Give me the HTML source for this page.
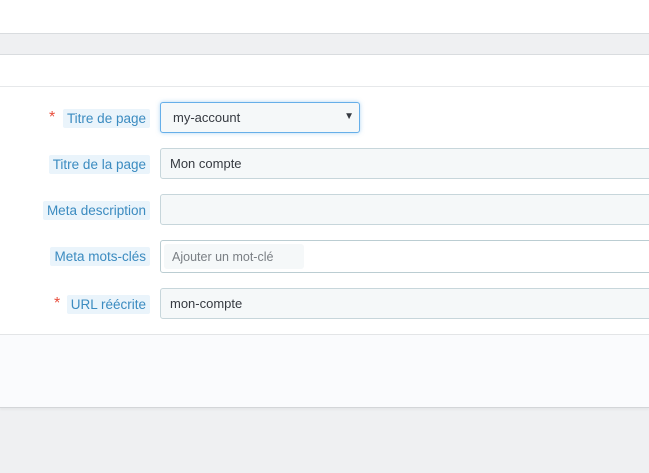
<!DOCTYPE html>
<html><head><style>
*{box-sizing:border-box;margin:0;padding:0}
body{width:649px;height:473px;background:#eff0f2;font-family:"Liberation Sans",sans-serif;position:relative;overflow:hidden}
.a{position:absolute}
.lbl{position:absolute;right:499px;height:19px;line-height:20px;background:#eaf4fb;color:#3b8bc0;font-size:13.5px;padding:0 4px;border-radius:2px;white-space:nowrap}
.star{position:absolute;color:#e84e3d;font-size:16px;line-height:20px}
.in{position:absolute;left:160px;width:500px;height:31px;background:#f5f8f9;border:1px solid #c7d6db;border-radius:3px;font-size:13px;color:#363a41;line-height:30px;padding-left:9px}
</style></head><body>
<div class="a" style="left:0;top:0;width:649px;height:33px;background:#fff"></div>
<div class="a" style="left:0;top:33px;width:649px;height:22px;background:#eff0f2;border-top:1px solid #d9dcdf;border-bottom:1px solid #d9dcdf"></div>
<div class="a" style="left:0;top:55px;width:649px;height:352px;background:#fff"></div>
<div class="a" style="left:0;top:86px;width:649px;height:1px;background:#e6e8ea"></div>
<div class="a" style="left:0;top:334px;width:649px;height:74px;background:#fafbfd;border-top:1px solid #e3e5e7;border-bottom:1px solid #d3d5d8;box-shadow:0 2px 2px rgba(0,0,0,0.04)"></div>

<span class="star" style="left:49px;top:108px">*</span>
<div class="lbl" style="top:109px">Titre de page</div>
<div class="in" style="width:200px;top:102px;border-color:#66afe9;box-shadow:0 0 4px rgba(102,175,233,0.5);padding-left:12px">my-account<span style="position:absolute;right:5px;top:-1px;font-size:10px">▼</span></div>

<div class="lbl" style="top:155px">Titre de la page</div>
<div class="in" style="top:148px">Mon compte</div>

<div class="lbl" style="top:201px">Meta description</div>
<div class="in" style="top:194px"></div>

<div class="lbl" style="top:247px">Meta mots-clés</div>
<div class="in" style="top:240px;height:33px;background:#fff;border-color:#bbcdd2"><div style="position:absolute;left:3px;top:3px;width:140px;height:25px;background:#f5f8f9;border-radius:3px;color:#7a7f84;line-height:26px;padding-left:8px;font-size:12.5px">Ajouter un mot-clé</div></div>

<span class="star" style="left:54px;top:294px">*</span>
<div class="lbl" style="top:295px">URL réécrite</div>
<div class="in" style="top:288px">mon-compte</div>
</body></html>
